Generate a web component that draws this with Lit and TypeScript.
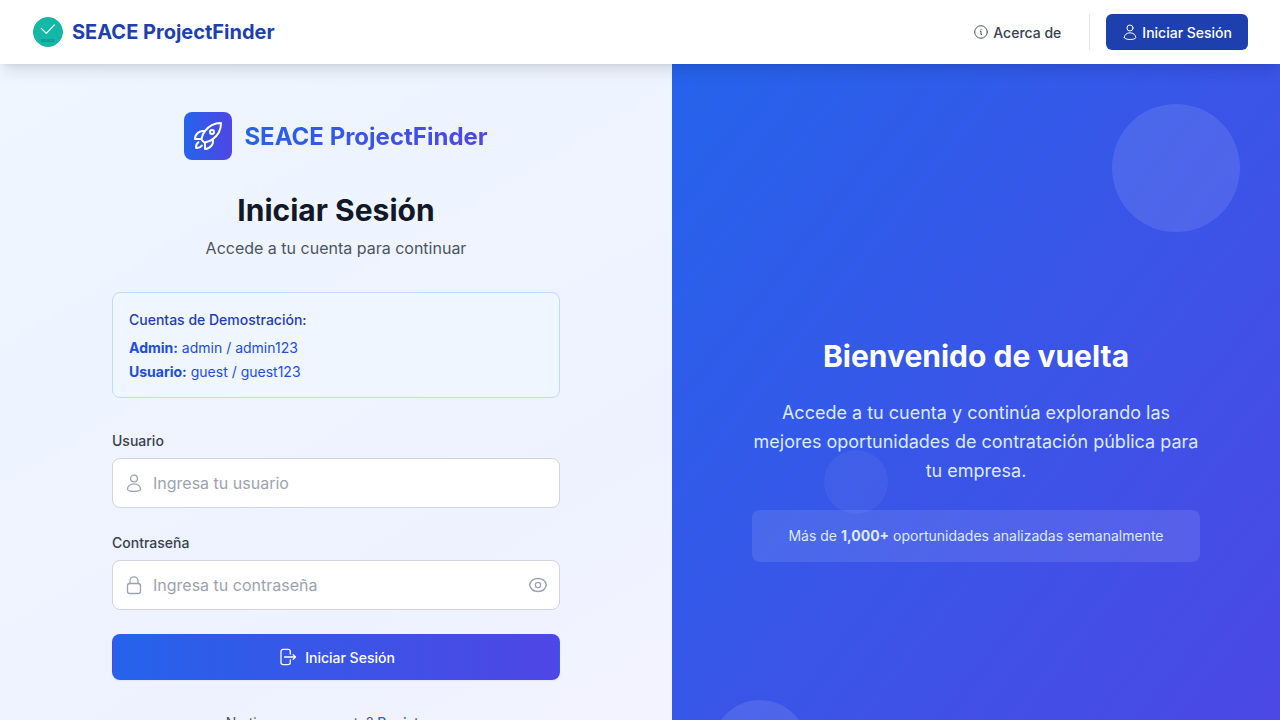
import { LitElement, html, css, svg } from "lit";
import { customElement, state } from "lit/decorators.js";

const userIcon = svg`<circle cx="9" cy="4.5" r="3.4"/><path d="M2.5 15.3C2.5 12 5.6 9.9 9 9.9s6.500 2.100 6.500 5.400C15.500 16.700 12 17.400 9 17.400s-6.500-.700-6.500-2.100Z"/>`;

@customElement("app-root")
export class AppRoot extends LitElement {
  static styles = css`
    :host {
      display: block;
      min-height: 100vh;
      font-family: Inter, "Liberation Sans", sans-serif;
      font-size: 14px;
      line-height: 20px;
      color: #374151;
    }
    *, *::before, *::after { box-sizing: border-box; }
    h1, h2, p { margin: 0; }
    a { color: inherit; text-decoration: none; }
    button, input { font: inherit; color: inherit; margin: 0; }
    svg { display: block; flex: none; fill: none; stroke: currentColor; stroke-linecap: round; stroke-linejoin: round; }
    .header {
      position: sticky;
      top: 0;
      z-index: 10;
      height: 64px;
      padding: 0 32px;
      display: flex;
      align-items: center;
      justify-content: space-between;
      background: #fff;
      box-shadow: 0 10px 15px -3px rgba(0, 0, 0, 0.1), 0 4px 6px -4px rgba(0, 0, 0, 0.1);
    }
    .brand {
      display: flex;
      align-items: center;
      gap: 8px;
      font-size: 20px;
      line-height: 28px;
      font-weight: 700;
      color: #1e40af;
    }
    .mark-text { font-size: 4px; font-weight: 700; fill: #0f8f83; stroke: none; }
    .nav { display: flex; align-items: center; font-weight: 500; line-height: 22px; }
    .nav-link { display: flex; align-items: center; gap: 4px; padding: 8px 12px 6px; }
    .divider { width: 1px; height: 36px; margin: 0 16px; background: #e5e7eb; }
    .nav-button {
      display: flex;
      align-items: center;
      gap: 4px;
      padding: 8px 16px 6px;
      border-radius: 6px;
      background: #1e40af;
      color: #fff;
    }
    .nav-icon { width: 16px; height: 16px; margin-bottom: 2px; }
    .page {
      display: grid;
      grid-template-columns: 21fr 19fr;
      background: linear-gradient(to bottom right, #eff6ff, #eef2ff, #faf5ff);
    }
    .access { padding: 48px 24px 102px; }
    .column { width: 100%; max-width: 448px; margin: 0 auto; }
    .logo { display: flex; align-items: center; justify-content: center; gap: 12px; margin-bottom: 32px; }
    .logo-tile {
      width: 48px;
      height: 48px;
      display: grid;
      place-items: center;
      border-radius: 8px;
      background: linear-gradient(to right, #2563eb, #4f46e5);
      color: #fff;
    }
    .logo-name {
      padding-top: 2px;
      font-size: 24px;
      line-height: 32px;
      font-weight: 700;
      background: linear-gradient(to right, #2563eb, #4f46e5);
      -webkit-background-clip: text;
      background-clip: text;
      color: transparent;
    }
    .title { font-size: 30px; line-height: 36px; font-weight: 700; text-align: center; color: #111827; }
    .subtitle { margin: 8px 0 32px; font-size: 16px; line-height: 24px; text-align: center; color: #4b5563; }
    .demo {
      display: grid;
      gap: 2px;
      padding: 16px 16px 14px;
      border: 1px solid #bfdbfe;
      border-radius: 8px;
      background: #eff6ff;
      line-height: 22px;
      color: #1d4ed8;
    }
    .demo-title { margin-bottom: 4px; font-weight: 500; color: #1e40af; }
    strong { font-weight: 700; }
    .form { display: grid; gap: 24px; margin: 32px 0; }
    .label { display: block; margin-bottom: 6px; line-height: 22px; font-weight: 500; }
    .field {
      display: flex;
      align-items: center;
      gap: 8px;
      padding: 0 11px;
      border: 1px solid #d1d5db;
      border-radius: 8px;
      background: #fff;
      color: #9ca3af;
    }
    .field:focus-within { border-color: #2563eb; }
    .field-icon { width: 20px; height: 20px; }
    .input {
      flex: 1;
      min-width: 0;
      padding: 12px 1px;
      border: 0;
      outline: 0;
      background: none;
      font-size: 16px;
      line-height: 24px;
      height: 48px;
      color: #111827;
    }
    .input::placeholder { color: #9ca3af; opacity: 1; }
    .reveal { padding: 0; border: 0; background: none; cursor: pointer; }
    .submit {
      display: flex;
      align-items: center;
      justify-content: center;
      gap: 8px;
      padding: 12px 16px 10px;
      line-height: 22px;
      border: 1px solid transparent;
      border-radius: 8px;
      background: linear-gradient(to right, #2563eb, #4f46e5);
      box-shadow: 0 1px 2px rgba(0, 0, 0, 0.05);
      color: #fff;
      font-weight: 500;
      cursor: pointer;
    }
    .submit-icon { width: 20px; height: 20px; margin-bottom: 2px; }
    .register { line-height: 22px; text-align: center; color: #4b5563; }
    .register-link { font-weight: 500; color: #2563eb; }
    .welcome {
      position: relative;
      overflow: hidden;
      display: flex;
      align-items: center;
      padding: 48px 24px;
      background: linear-gradient(to bottom right, #2563eb, #4f46e5);
      text-align: center;
      color: #dbeafe;
    }
    .circle { position: absolute; border-radius: 50%; background: rgba(255, 255, 255, 0.1); }
    .circle-top { top: 40px; right: 40px; width: 128px; height: 128px; }
    .circle-middle { top: 50%; left: 25%; width: 64px; height: 64px; background: rgba(255, 255, 255, 0.05); }
    .circle-bottom { bottom: 40px; left: 40px; width: 96px; height: 96px; }
    .message { position: relative; }
    .welcome-title { font-size: 30px; line-height: 36px; font-weight: 700; color: #fff; }
    .welcome-text { margin: 24px 0 25px; font-size: 18px; line-height: 29px; }
    .stat { padding: 16px; border-radius: 8px; background: rgba(255, 255, 255, 0.1); }
  `;

  @state() private revealed = false;

  render() {
    return html`
      <header class="header">
        <a class="brand" href="#">
          <svg width="32" height="32" viewBox="0 0 32 32" aria-hidden="true">
            <circle cx="16" cy="16" r="14.500" fill="#14b8a6" stroke="#12b0a0"/>
            <path d="m9.300 12.300 5 5 8-8.500" stroke="#fff" stroke-width="1.200"/>
            <text class="mark-text" x="16" y="26" text-anchor="middle">SEACE</text>
          </svg>
          SEACE ProjectFinder
        </a>
        <nav class="nav">
          <a class="nav-link" href="#">
            <svg class="nav-icon" viewBox="0 0 16 16" stroke-width=".9" aria-hidden="true">
              <circle cx="8" cy="8" r="6.300"/>
              <path d="M7.300 7.300H8v3.200h.700M8 5.300v.200"/>
            </svg>
            Acerca de
          </a>
          <span class="divider"></span>
          <a class="nav-button" href="#">
            <svg class="nav-icon" viewBox="0 0 18 18" stroke-width="1.100" aria-hidden="true">${userIcon}</svg>
            Iniciar Sesión
          </a>
        </nav>
      </header>
      <main class="page">
        <section class="access">
          <div class="column">
            <div class="logo">
              <span class="logo-tile">
                <svg width="32" height="32" viewBox="0 0 24 24" stroke-width="1.500" aria-hidden="true">
                  <path d="M15.590 14.370a6 6 0 0 1-5.840 7.380v-4.800m5.840-2.580a14.980 14.980 0 0 0 6.160-12.120A14.980 14.980 0 0 0 9.631 8.410m5.960 5.960a14.926 14.926 0 0 1-5.841 2.580m-.119-8.540a6 6 0 0 0-7.381 5.840h4.800m2.581-5.840a14.927 14.927 0 0 0-2.580 5.840m2.699 2.700c-.103.021-.207.041-.311.060a15.090 15.090 0 0 1-2.448-2.448 14.900 14.900 0 0 1 .060-.312m-2.240 2.390a4.493 4.493 0 0 0-1.757 4.306 4.493 4.493 0 0 0 4.306-1.758M16.500 9a1.500 1.500 0 1 1-3 0 1.500 1.500 0 0 1 3 0Z"/>
                </svg>
              </span>
              <span class="logo-name">SEACE ProjectFinder</span>
            </div>
            <h1 class="title">Iniciar Sesión</h1>
            <p class="subtitle">Accede a tu cuenta para continuar</p>
            <div class="demo">
              <p class="demo-title">Cuentas de Demostración:</p>
              <p><strong>Admin:</strong> admin / admin123</p>
              <p><strong>Usuario:</strong> guest / guest123</p>
            </div>
            <form class="form" @submit=${(e: Event) => e.preventDefault()}>
              <div>
                <label class="label" for="user">Usuario</label>
                <div class="field">
                  <svg class="field-icon" viewBox="-1 -1 20 20" stroke-width="1.300" aria-hidden="true">${userIcon}</svg>
                  <input class="input" id="user" type="text" placeholder="Ingresa tu usuario" />
                </div>
              </div>
              <div>
                <label class="label" for="password">Contraseña</label>
                <div class="field">
                  <svg class="field-icon" viewBox="0 0 20 20" stroke-width="1.300" aria-hidden="true">
                    <rect x="3.500" y="8.500" width="13" height="10" rx="2.200"/>
                    <path d="M6 8.500V5.800a4 4 0 0 1 8 0v2.700"/>
                  </svg>
                  <input class="input" id="password" type=${this.revealed ? "text" : "password"} placeholder="Ingresa tu contraseña" />
                  <button class="reveal" type="button" aria-label="Mostrar contraseña" @click=${() => (this.revealed = !this.revealed)}>
                    <svg class="field-icon" viewBox="0 0 20 20" stroke-width="1.300" aria-hidden="true">
                      <path d="M1.600 10C2.500 6.100 5.800 3.500 10 3.500S17.500 6.100 18.400 10C17.500 13.900 14.200 16.500 10 16.500S2.500 13.900 1.600 10Z"/>
                      <circle cx="10" cy="10" r="2.600"/>
                    </svg>
                  </button>
                </div>
              </div>
              <button class="submit" type="submit">
                <svg class="submit-icon" viewBox="0 0 20 20" stroke-width="1.300" aria-hidden="true">
                  <path d="M13.300 7V4.400a2 2 0 0 0-2-2H6a2 2 0 0 0-2 2v11.200a2 2 0 0 0 2 2h5.300a2 2 0 0 0 2-2V13M7.500 10h11M16.200 7.700l2.300 2.300-2.300 2.300"/>
                </svg>
                Iniciar Sesión
              </button>
            </form>
            <p class="register">¿No tienes una cuenta? <a class="register-link" href="#">Registrarse</a></p>
          </div>
        </section>
        <section class="welcome">
          <span class="circle circle-top"></span>
          <span class="circle circle-bottom"></span>
          <span class="circle circle-middle"></span>
          <div class="column message">
            <h2 class="welcome-title">Bienvenido de vuelta</h2>
            <p class="welcome-text">Accede a tu cuenta y continúa explorando las mejores oportunidades de contratación pública para tu empresa.</p>
            <p class="stat">Más de <strong>1,000+</strong> oportunidades analizadas semanalmente</p>
          </div>
        </section>
      </main>
    `;
  }
}
